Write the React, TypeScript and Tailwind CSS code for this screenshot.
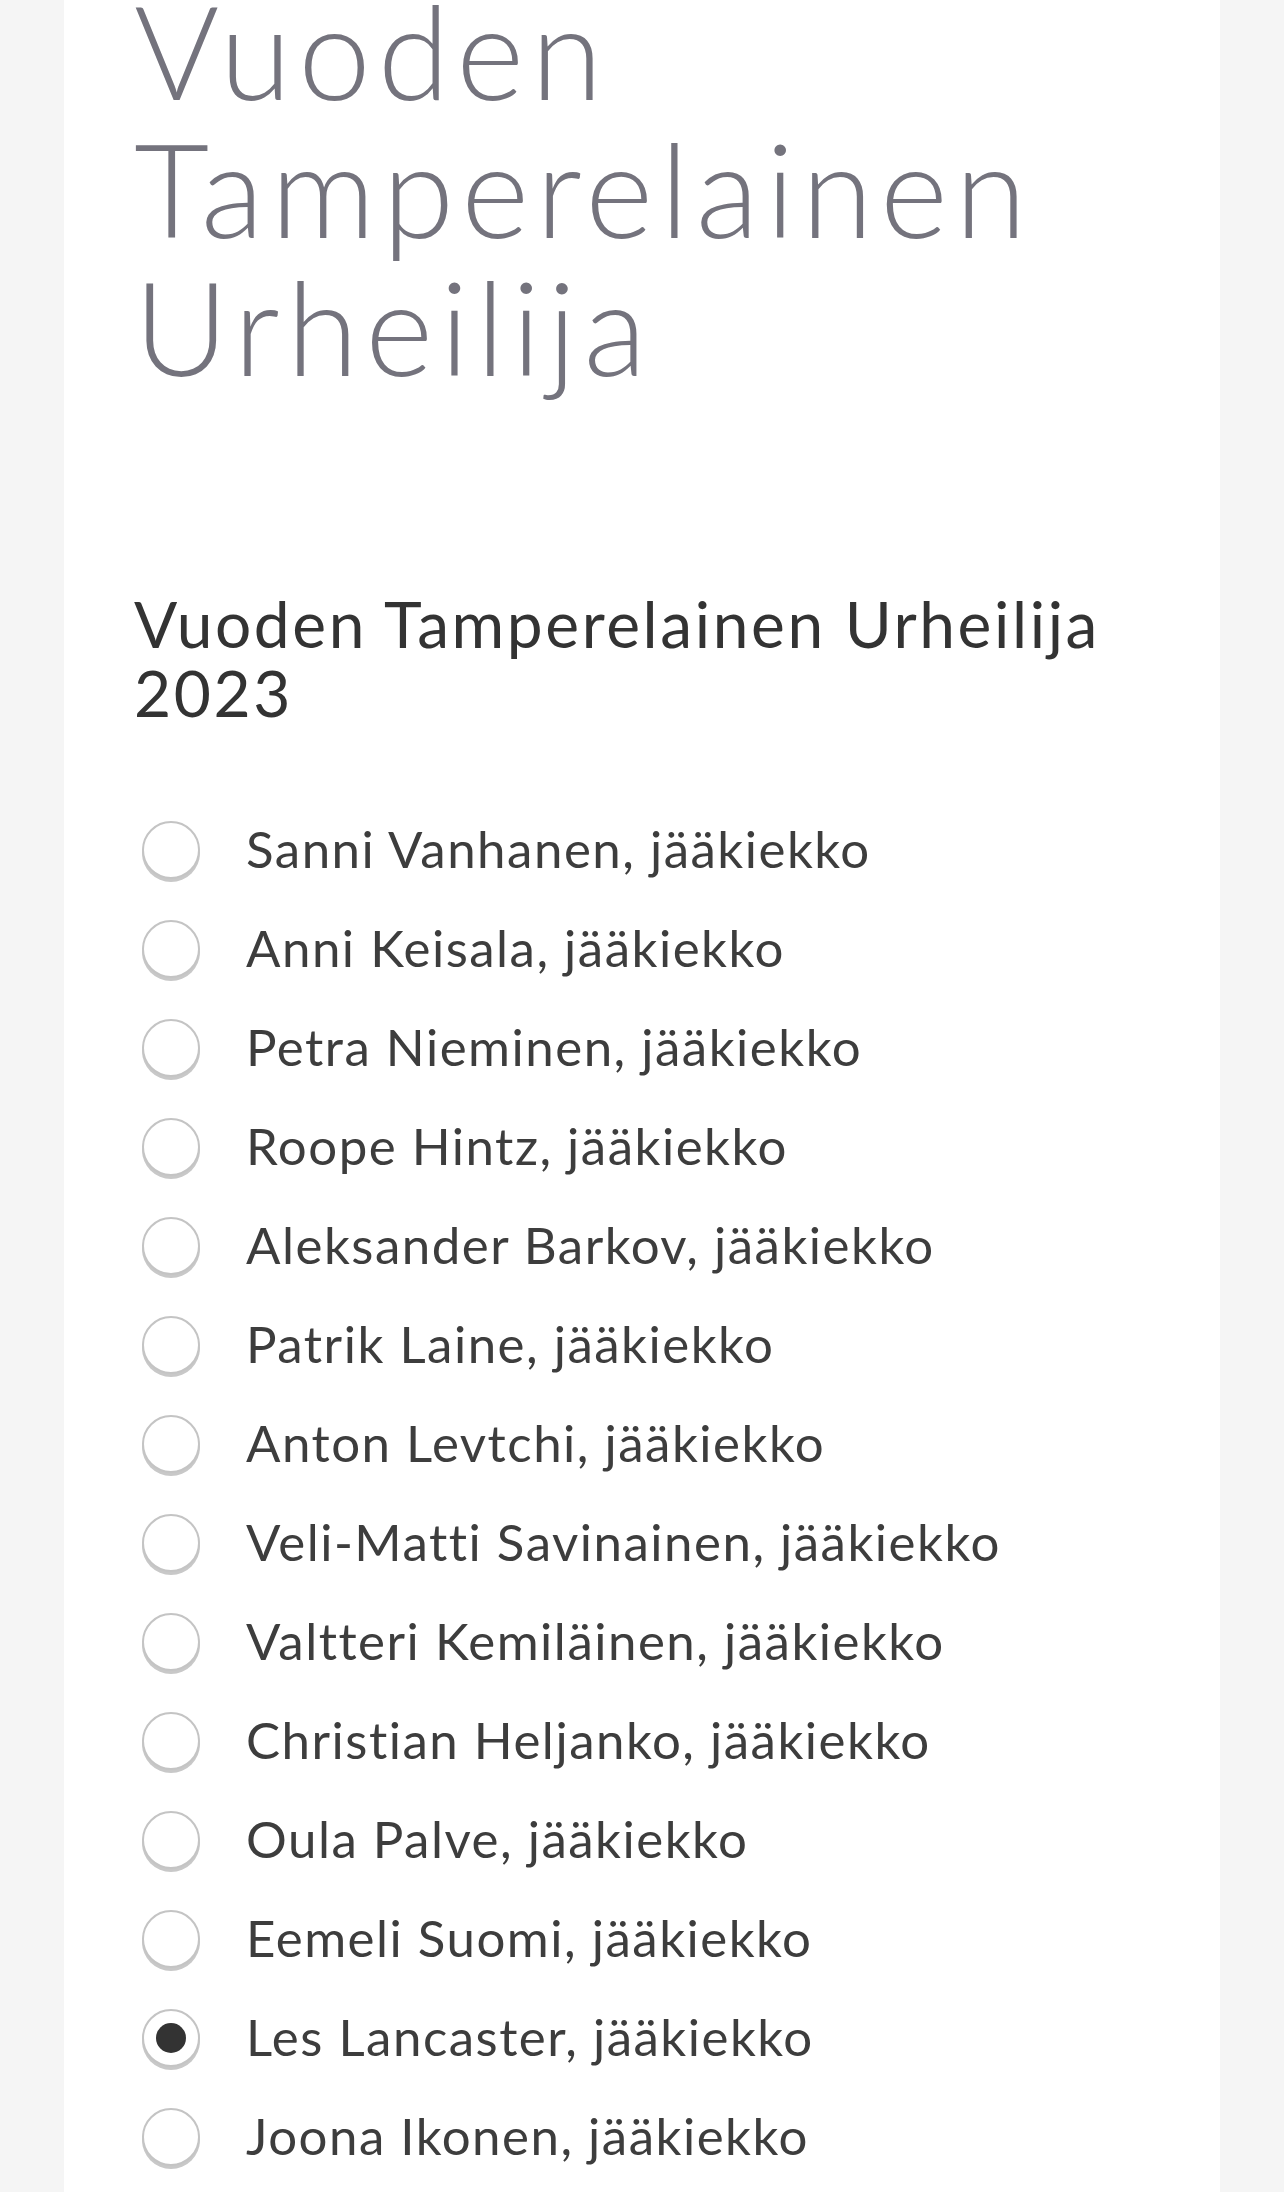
import React from 'react';

const candidates = [
  'Sanni Vanhanen, jääkiekko',
  'Anni Keisala, jääkiekko',
  'Petra Nieminen, jääkiekko',
  'Roope Hintz, jääkiekko',
  'Aleksander Barkov, jääkiekko',
  'Patrik Laine, jääkiekko',
  'Anton Levtchi, jääkiekko',
  'Veli-Matti Savinainen, jääkiekko',
  'Valtteri Kemiläinen, jääkiekko',
  'Christian Heljanko, jääkiekko',
  'Oula Palve, jääkiekko',
  'Eemeli Suomi, jääkiekko',
  'Les Lancaster, jääkiekko',
  'Joona Ikonen, jääkiekko',
];

const Radio = ({ checked }: { checked: boolean }) => (
  <span className="flex h-[58px] w-[58px] shrink-0 items-center justify-center rounded-full border-2 border-[#c4c4c4] bg-white shadow-[0_3px_0_#c8c8c8]">
    {checked && <span className="h-[30px] w-[30px] rounded-full bg-[#333333]" />}
  </span>
);

export default function App() {
  return (
    <div className="min-h-[2192px] bg-[#f5f5f5] font-['Lato',sans-serif]">
      <div className="mx-16 min-h-[2192px] overflow-hidden bg-white px-[70px]">
        {/* Page title */}
        <h1 className="-mt-[19px] text-[130px] font-light leading-[138px] tracking-[7px] text-[#74737d]">
          Vuoden
          <br />
          Tamperelainen
          <br />
          Urheilija
        </h1>

        {/* Poll */}
        <h2 className="mt-[194px] text-[64px] leading-[69px] tracking-[2.6px] text-[#333333]">
          Vuoden Tamperelainen Urheilija 2023
        </h2>

        <ul className="mt-[73px]">
          {candidates.map((name) => {
            const checked = name.startsWith('Les');
            return (
              <li key={name} className="flex h-[99px] items-center gap-[46px] pl-2">
                <Radio checked={checked} />
                <span className="text-[51px] tracking-[1.5px] text-[#3d3d3d]">{name}</span>
              </li>
            );
          })}
        </ul>
      </div>
    </div>
  );
}
